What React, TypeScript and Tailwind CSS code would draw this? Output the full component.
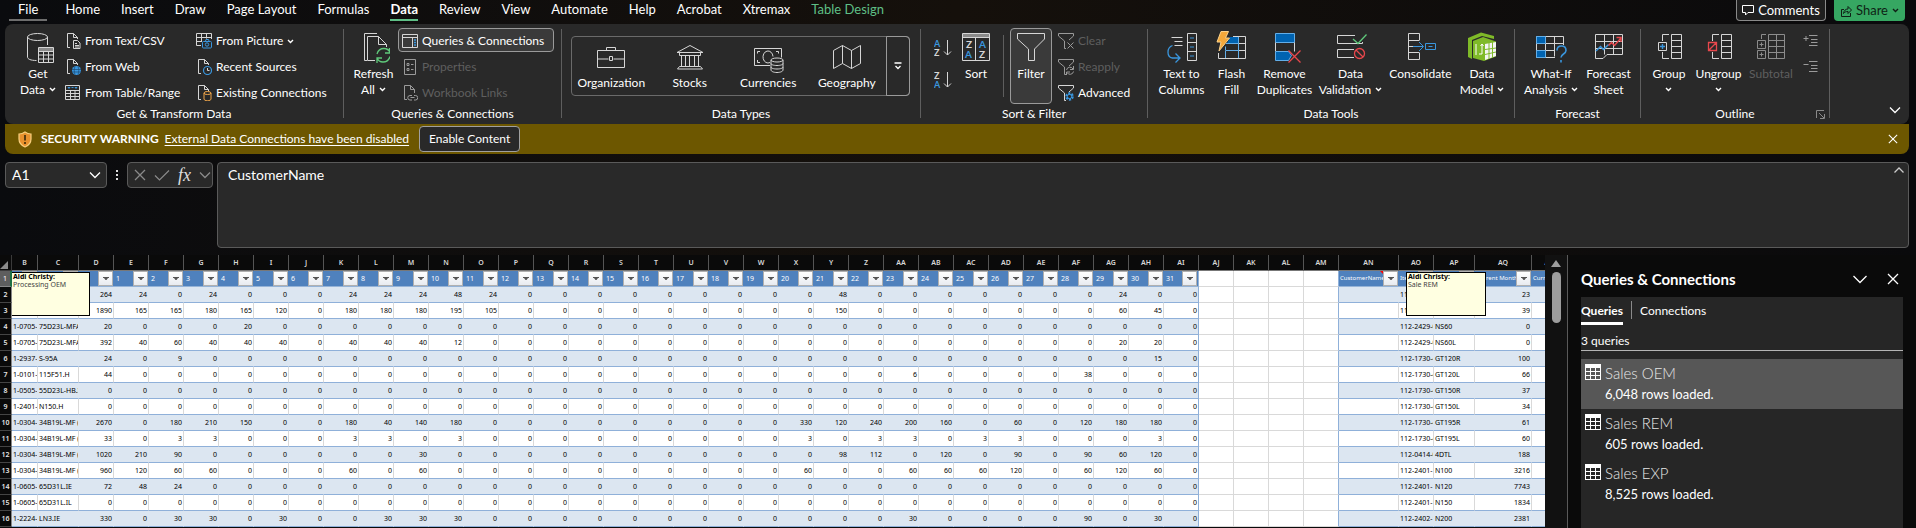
import React from 'react';

type Kids = { children?: React.ReactNode };

/* ---------- icon helpers ---------- */
function Svg({ w, h, children, className = '' }: { w: number; h: number; className?: string } & Kids) {
  return (
    <svg width={w} height={h} viewBox={`0 0 ${w} ${h}`} fill="none" stroke="#d6d6d6" className={`shrink-0 ${className}`} aria-hidden="true">
      {children}
    </svg>
  );
}
const Big = ({ children }: Kids) => <Svg w={32} h={32}>{children}</Svg>;
const Small = ({ children }: Kids) => <Svg w={16} h={16}>{children}</Svg>;

const Caret = ({ className = '' }: { className?: string }) => (
  <Svg w={7} h={5} className={`inline-block ${className}`}>
    <path d="M1 1l2.5 2.5L6 1" stroke="currentColor" strokeWidth="1.4" />
  </Svg>
);
const Chevron = ({ up = false }: { up?: boolean }) => (
  <Svg w={12} h={8}>
    <path d={up ? 'M1.5 6.5L6 2l4.5 4.5' : 'M1 1.5l5 5 5-5'} stroke="currentColor" strokeWidth="1.3" />
  </Svg>
);
const WideChevron = () => (
  <Svg w={14} h={9}>
    <path d="M.5 1L7 7.5 13.5 1" stroke="currentColor" strokeWidth="1.3" />
  </Svg>
);
const Cross = ({ size = 12 }: { size?: number }) => (
  <svg width={size} height={size} viewBox="0 0 12 12" fill="none" stroke="currentColor" strokeWidth="1.3" aria-hidden="true">
    <path d="M1 1l10 10M11 1L1 11" />
  </svg>
);

const BLUE = '#3a96dd';
const GREEN = '#5fc97b';
const RED = '#e8474c';
const SheetOutline = () => <path d="M5 14.5H2.5V.5h6l4 4V6M8.5.5v4h4" />;

const GetDataIcon = () => (
  <Big>
    <ellipse cx="15.5" cy="6" rx="10" ry="3.5" />
    <path d="M5.5 6v20c0 2 3 3.5 9 3.5M25.5 6v8" />
    <path d="M16.5 16.5h15v15h-15zM16.5 20.5h15M16.5 24h15M16.5 28h15M21.5 20v11M26.5 20v11" />
    <path d="M17 18.5h14" stroke="#8a8a8a" strokeWidth="3" />
  </Big>
);
const TextCsvIcon = () => (
  <Small>
    <SheetOutline />
    <path d="M8.5 7.5h4l2.5 2.5v5.5H8.5zM10 10.5h2M10 12.5h4M10 14h4" />
  </Small>
);
const WebIcon = () => (
  <Small>
    <SheetOutline />
    <circle cx="11.5" cy="11.5" r="4.5" fill={BLUE} stroke="none" />
    <path d="M7 10.5h9M7 13h9M10 7.5c-1 2.5-1 5.5 0 8M13 7.5c1 2.5 1 5.5 0 8" stroke="#1d4f7c" strokeWidth=".8" />
  </Small>
);
const TableRangeIcon = () => (
  <Small>
    <path d="M.5.5h14v14H.5zM.5 5.5h14M.5 8.5h14M.5 11.5h14M5.5 5v10M10 5v10" />
    <path d="M3 2.5h2l-1 1zM10 2.5h2l-1 1zM6.5 2.5h2" stroke={BLUE} />
  </Small>
);
const PictureIcon = () => (
  <Small>
    <path d="M5 12.5H.5V.5h15V6M.5 4.5h15M.5 8.5H6M5.5.5v8M10.5.5v5" />
    <rect x="6.5" y="8.5" width="9" height="6.5" rx="1" stroke={BLUE} />
    <path d="M9.5 8l.5-1.5h2.5L13 8" stroke={BLUE} />
    <circle cx="11" cy="11.5" r="1.7" stroke={BLUE} />
  </Small>
);
const RecentIcon = () => (
  <Small>
    <SheetOutline />
    <circle cx="11.5" cy="11.5" r="4" stroke={BLUE} strokeWidth="1.2" />
    <path d="M11.5 9v2.5h2" />
  </Small>
);
const ExistingIcon = () => (
  <Small>
    <SheetOutline />
    <ellipse cx="11.5" cy="8" rx="3.5" ry="1.5" stroke="#f0a64b" />
    <path d="M8 8v6c0 1 1.5 1.7 3.5 1.7S15 15 15 14V8" stroke="#f0a64b" />
  </Small>
);
const RefreshIcon = () => (
  <Big>
    <path d="M19 2.5H6.5v27H9" />
    <path d="M17 29.5H9.5v-24h11l8 8V16M20.5 5.5v8h8" />
    <path d="M19 23c1-3.5 4-5.5 7-5.5 3 0 5 1.5 6 4M32 25.5c-1 3.5-4 5.5-7 5.5-3 0-5-1.5-6-4M31.5 17v5H27M19 32v-5h5" stroke={GREEN} strokeWidth="1.3" />
  </Big>
);
const QueriesIcon = () => (
  <Small>
    <path d="M.5 1.5h15v13H.5zM.5 4.5h15M10.5 5v9" />
    <path d="M12 7h2M12 9.5h2M12 12h2" stroke={BLUE} strokeWidth="1.4" />
  </Small>
);
const PropertiesIcon = () => (
  <Small>
    <g stroke="#9a9a9a">
      <path d="M2.5.5h11v15h-11zM5 4.5h2v2H5zM5 9.5h2v2H5zM9 5.5h2.5M9 10.5h2.5" />
    </g>
  </Small>
);
const LinksIcon = () => (
  <Small>
    <g stroke="#9a9a9a">
      <path d="M5 14.5H2.5V.5h6l4 4V8M8.5.5v4h4" />
      <path d="M10 10.5H8a2 2 0 000 4.5h2M12 10.5h1.5a2 2 0 010 4.5H12M8.5 12.5h4" />
    </g>
  </Small>
);
const OrganizationIcon = () => (
  <Big>
    <path d="M2.5 7.5h27v17h-27zM2.5 16h11M18.5 16h11M14.5 13.5h3v4h-3zM11.5 7.5v-3h9v3" />
  </Big>
);
const StocksIcon = () => (
  <Big>
    <path d="M3 9.5L16 2.5l13 7zM5.5 9.5v3h21v-3M7.5 12.5v11M11.5 12.5v11M15.5 12.5v11M20.5 12.5v11M24.5 12.5v11M5.5 23.5h21l2 2.5h-25z" />
  </Big>
);
const CurrenciesIcon = () => (
  <Big>
    <path d="M18 22.5H2.5V5.5h27v9" />
    <path d="M8 8.5H5.5v2M5.5 17v2.5H8M24 8.5h2.5v2" />
    <path d="M18 19.5a5 6 0 113-6" />
    <ellipse cx="25" cy="17" rx="6" ry="2" />
    <path d="M19 17v10c0 1.3 2.5 2.5 6 2.5s6-1.2 6-2.5V17M19 20.5c0 1.2 2.5 2 6 2s6-.8 6-2M19 24c0 1.2 2.5 2 6 2s6-.8 6-2" />
  </Big>
);
const GeographyIcon = () => (
  <Big>
    <path d="M2.5 7.5l9-5 9 5 9-5v18l-9 5-9-5-9 5zM11.5 2.5v18M20.5 7.5v18" />
  </Big>
);
const SortPairIcon = ({ first, second, blueFirst }: { first: string; second: string; blueFirst: boolean }) => (
  <Svg w={18} h={18}>
    <g stroke="none" className="text-[9px] font-bold">
      <text x="0" y="8" fill={blueFirst ? BLUE : '#d6d6d6'}>{first}</text>
      <text x="0" y="17" fill={blueFirst ? '#d6d6d6' : BLUE}>{second}</text>
    </g>
    <path d="M13.5 1v15M10 12.5l3.5 3.5 3.5-3.5" />
  </Svg>
);
const SortIcon = () => (
  <Big>
    <path d="M2.5 2.5h27v27h-27zM2.5 6.5h27M15.5 6.5v23" />
    <path d="M3 4.5h26" stroke="#8a8a8a" strokeWidth="3" />
    <g stroke="none" className="text-[10px] font-bold">
      <text x="6" y="17" fill="#d6d6d6">Z</text>
      <text x="5" y="27" fill={BLUE}>A</text>
      <text x="19" y="17" fill={BLUE}>A</text>
      <text x="19" y="27" fill="#d6d6d6">Z</text>
    </g>
  </Big>
);
const FilterIcon = () => (
  <Big>
    <path d="M2.5 2.5h27V8l-10 10v11.5h-6V18l-11-10z" />
  </Big>
);
const SmallFunnel = ({ color }: { color: string }) => <path d="M8 15.5H6.5V8L.5 3V.5h15V3L11 7" stroke={color} />;
const ClearIcon = () => (
  <Small>
    <SmallFunnel color="#9a9a9a" />
    <path d="M9.5 9.5l6 6M15.5 9.5l-6 6" stroke="#9a9a9a" />
  </Small>
);
const ReapplyIcon = () => (
  <Small>
    <SmallFunnel color="#9a9a9a" />
    <path d="M8.5 11a3.5 3.5 0 016.5-1M15.5 12.5a3.5 3.5 0 01-6.5 1M15.5 7v3.5H12M8.5 16v-3H12" stroke="#9a9a9a" />
  </Small>
);
const AdvancedIcon = () => (
  <Small>
    <SmallFunnel color="#d6d6d6" />
    <circle cx="11.5" cy="11.5" r="3" stroke={BLUE} strokeWidth="2.5" strokeDasharray="2 1.14" />
    <circle cx="11.5" cy="11.5" r="2.2" stroke={BLUE} />
  </Small>
);
const TextColumnsIcon = () => (
  <Big>
    <path d="M5.5 6.5h11M8.5 10.5h8M8.5 14.5h8" />
    <path d="M21.5 2.5h9v27h-9zM21.5 11.5h9M21.5 20.5h9" />
    <path d="M24 7h4M24 16h4M24 25h4" stroke={BLUE} />
    <path d="M6.5 14.5c-6 2-6 11.5 0 12.5H14M9.5 22.5L14 27l-4.5 4.5" stroke={BLUE} strokeWidth="1.3" />
  </Big>
);
const FlashIcon = () => (
  <Big>
    <path d="M2.5 22v5.5h27v-22H17M29.5 12.5h-8M29.5 19.5h-8M22.5 5.5v22M9.5 20v7.5" />
    <path d="M14 6h8.5v6.5H11z" fill="#0063b1" stroke="none" />
    <path d="M10 12.5h12.5v7H9.5v-4M22.5 6v21M9.5 20v7" stroke="#63aee8" />
    <path d="M5 .5h7.5L9.5 7h4L3 20l2-9H1z" fill="#f4a83a" stroke="#fbd28a" />
  </Big>
);
const DuplicatesIcon = () => (
  <Big>
    <path d="M6.5 2.5h19v9h-19z" fill="#0063b1" stroke="#63aee8" />
    <path d="M6.5 11.5v9M25.5 11.5v9" />
    <path d="M6.5 20.5h13l3 4-3 5h-13z" fill="#0063b1" stroke="#63aee8" />
    <path d="M19.5 19.5l12 12M31.5 19.5l-12 12" stroke={RED} strokeWidth="1.3" />
  </Big>
);
const ValidationIcon = () => (
  <Big>
    <path d="M20 4.5H2.5v8h25V11M19 18.5H2.5v8H19" />
    <path d="M18 8l5 4.5 8.5-9" stroke={GREEN} strokeWidth="1.3" />
    <circle cx="24.5" cy="22.5" r="5" stroke={RED} strokeWidth="1.3" />
    <path d="M21 19l7 7" stroke={RED} strokeWidth="1.3" />
  </Big>
);
const ConsolidateIcon = () => (
  <Big>
    <path d="M14.5 9V2.5h-11v26h11V22M3.5 9.5h11M3.5 21.5h11M3.5 15.5H10" />
    <path d="M8 15.5h10M14 11l4.5 4.5L14 20M20.5 12.5h10v6h-10zM23.5 15.5h4" stroke={BLUE} />
  </Big>
);
const ModelIcon = () => (
  <Big>
    <path d="M2 7l13-5.5 13 3.5v3L16 5 6 9v19l-4-2z" fill="#7fba28" stroke="none" />
    <path d="M7 10l10-4 13 4.5v15L18 30 7 27z" fill="#7fba28" stroke="none" />
    <path d="M19 13l11-2v14l-11 4z" fill="#f4f4f4" stroke="none" />
    <path d="M19 18.5l11-1.5M19 23.5l11-2.5M23 12v16M26.5 11v16" stroke="#7fba28" />
    <path d="M10 13v11M13 23h3V13M14.5 15l1.5-2 1.5 2" stroke="#fff" />
  </Big>
);
const WhatIfIcon = () => (
  <Big>
    <path d="M1.5 5.5h27V14M20 26.5H1.5v-21M1.5 12.5h27M1.5 19.5h18M10.5 5.5v21M19.5 5.5v20" />
    <path d="M1.5 5.5h9v7h-9zM1.5 19.5h9v7h-9z" fill="#0063b1" stroke="#63aee8" />
    <path d="M22 19.5c0-3 2-4.5 4.5-4.5s4.5 1.5 4.5 4.5c0 3.5-5 3.5-5 7M26 29v2.5" stroke={BLUE} strokeWidth="1.6" />
  </Big>
);
const ForecastIcon = () => (
  <Big>
    <path d="M2.5 3.5h27v20H14l-4 4H2.5zM2.5 10.5h27M2.5 17.5h27M11.5 3.5v20M20.5 3.5v20" />
    <path d="M3 20l4.5-4.5 3 3 5-5" stroke={BLUE} strokeWidth="1.5" />
    <path d="M15.5 14.5l3-3 3 3L28 7M23.5 6.5H28V11" stroke={RED} strokeWidth="1.5" />
  </Big>
);
const BlockColumn = () => <path d="M18.5 3.5h10v24h-10zM18.5 9.5h10M18.5 15.5h10M18.5 21.5h10" />;
const GroupIcon = () => (
  <Big>
    <BlockColumn />
    <path d="M16 3.5H9.5V10M9.5 21v6.5H16M5.5 11.5h8v8h-8z" />
    <path d="M7 15.5h5M9.5 13v5" stroke={BLUE} strokeWidth="1.4" />
  </Big>
);
const UngroupIcon = () => (
  <Big>
    <BlockColumn />
    <path d="M16 3.5H9.5V10M9.5 21v6.5H16" />
    <path d="M5.5 11.5h8v8h-8zM5.5 19.5l8-8" stroke={RED} strokeWidth="1.3" />
  </Big>
);
const SubtotalIcon = () => (
  <Big>
    <g stroke="#8c8c8c">
      <path d="M13.5 3.5h16v24h-16zM13.5 9.5h16M13.5 15.5h16M13.5 21.5h16M21.5 3.5v24" />
      <path d="M11 3.5H6.5V8M2.5 9.5h8v8h-8zM2.5 19.5h8v8h-8zM4.5 13.5h4M6.5 11.5v4M4.5 23.5h4M6.5 21.5v4" />
    </g>
  </Big>
);
const DetailIcon = ({ plus }: { plus: boolean }) => (
  <Svg w={15} h={12}>
    <g stroke="#9a9a9a">
      <path d="M6 1.5h8.5M8 5.5h6.5M8 8.5h6.5M6 11.5h8.5M.5 4.5h5" />
      {plus && <path d="M3 2v5" />}
    </g>
  </Svg>
);
const TableGlyph = () => (
  <Svg w={16} h={16}>
    <rect width="16" height="16" fill="#fff" stroke="none" />
    <g fill="currentColor" stroke="none">
      {[4, 8, 12].map((y) => [1, 6, 11].map((x) => <rect key={`${x}-${y}`} x={x} y={y} width="4" height="3" />))}
    </g>
  </Svg>
);
const Shield = () => (
  <Svg w={14} h={17}>
    <path d="M7 1c2 1.5 4 2 6 2v5c0 4-2.500 6.500-6 8-3.500-1.500-6-4-6-8V3c2 0 4-.5 6-2z" fill="#e8912d" stroke="#f9cf7d" strokeWidth="1.2" />
    <path d="M7 4v5.5M7 11v2" stroke="#5b3d10" strokeWidth="2" />
  </Svg>
);

/* ---------- ribbon parts ---------- */
const TABS = ['File', 'Home', 'Insert', 'Draw', 'Page Layout', 'Formulas', 'Data', 'Review', 'View', 'Automate', 'Help', 'Acrobat', 'Xtremax', 'Table Design'];

function TabBar() {
  return (
    <header className="flex h-6 items-start justify-between pr-[11px] pl-[9px]">
      <nav className="flex items-start gap-[21px] whitespace-nowrap text-[13px] leading-[19px]">
        {TABS.map((t) => (
          <button
            key={t}
            className={
              t === 'File'
                ? '-mr-[3px] border-b-2 border-[#6e6e6e] px-[9px]'
                : t === 'Data'
                  ? 'border-b-2 border-[#5fbf86] font-bold'
                  : t === 'Table Design'
                    ? 'text-[#5fbf86]'
                    : ''
            }
          >
            {t}
          </button>
        ))}
      </nav>
      <div className="flex gap-2 text-[13px] leading-[19px]">
        <button className="flex h-[21px] w-[90px] items-center justify-center gap-1 rounded-b border border-t-0 border-[#8a8a8a] bg-[#1f1f1f]">
          <Svg w={12} h={12}><path d="M.5 1.5h11v7H6L3.5 11V8.5h-3z" stroke="#fff" /></Svg>
          Comments
        </button>
        <button className="flex h-[21px] w-[71px] items-center justify-center gap-1 rounded-b bg-[#36a762] text-[#0f1f15]">
          <Svg w={12} h={12}><path d="M4 4.5H1.5v7h9V8M3.5 8.5C4 5.500 5.500 4 8 4V1.500L11.500 5 8 8.500V6.500c-2 0-3.500.5-4.500 2z" stroke="#0f1f15" /></Svg>
          Share
          <Caret />
        </button>
      </div>
    </header>
  );
}

function LargeButton({ icon, lines, caret = false, width, active = false, disabled = false }: {
  icon: React.ReactNode; lines: string[]; caret?: boolean; width: string; active?: boolean; disabled?: boolean;
}) {
  return (
    <button
      disabled={disabled}
      className={`flex h-[76px] shrink-0 flex-col items-center rounded ${width} ${active ? 'border border-[#9a9a9a] bg-[#3a3a3a] pt-[2px]' : 'pt-[3px]'} ${disabled ? 'text-[#5f5f5f]' : ''}`}
    >
      {icon}
      <span className="mt-[3px] flex flex-col items-center whitespace-nowrap leading-4">
        {lines.map((l, i) => (
          <span key={i}>
            {l}
            {caret && i === lines.length - 1 && <Caret className={l ? 'mb-0.5 ml-1' : 'mb-0.5'} />}
          </span>
        ))}
      </span>
    </button>
  );
}

function SmallButton({ icon, label, caret = false, active = false, disabled = false }: {
  icon: React.ReactNode; label: string; caret?: boolean; active?: boolean; disabled?: boolean;
}) {
  return (
    <button
      disabled={disabled}
      className={`flex h-6 items-center gap-1 rounded border px-[3px] pt-0.5 whitespace-nowrap ${active ? 'border-[#9a9a9a] bg-[#3a3a3a]' : 'border-transparent'} ${disabled ? 'text-[#5f5f5f]' : ''}`}
    >
      {icon}
      {label}
      {caret && <Caret />}
    </button>
  );
}

const Stack = ({ children, width = '' }: { width?: string } & Kids) => (
  <div className={`flex flex-col items-stretch gap-0.5 ${width}`}>{children}</div>
);

function Group({ label, width, children, launcher = false }: { label: string; width: string; launcher?: boolean } & Kids) {
  return (
    <section className={`flex shrink-0 items-stretch ${width}`}>
      <div className="flex min-w-0 flex-1 flex-col pt-1">
        <div className="flex h-[78px] items-start pl-[5px]">{children}</div>
        <div className="relative text-center leading-4">
          {label}
          {launcher && (
            <button aria-label="Outline settings" className="absolute top-1 right-1">
              <Svg w={9} h={9}><path d="M.5 8V.5H8M3 3l5 5M8.5 4v4.5H4" stroke="#8a8a8a" /></Svg>
            </button>
          )}
        </div>
      </div>
      <div className="mt-[5px] mb-1.5 w-px bg-[#5e5e5e]" />
    </section>
  );
}

function Ribbon() {
  return (
    <div className="flex h-[100px] rounded-lg bg-[#292929]">
      <Group label="Get & Transform Data" width="w-[339px]">
        <LargeButton icon={<GetDataIcon />} lines={['Get', 'Data']} caret width="w-[56px]" />
        <Stack width="-ml-[5px] w-[131px]">
          <SmallButton icon={<TextCsvIcon />} label="From Text/CSV" />
          <SmallButton icon={<WebIcon />} label="From Web" />
          <SmallButton icon={<TableRangeIcon />} label="From Table/Range" />
        </Stack>
        <Stack>
          <SmallButton icon={<PictureIcon />} label="From Picture" caret />
          <SmallButton icon={<RecentIcon />} label="Recent Sources" />
          <SmallButton icon={<ExistingIcon />} label="Existing Connections" />
        </Stack>
      </Group>
      <Group label="Queries & Connections" width="w-[218px]">
        <LargeButton icon={<RefreshIcon />} lines={['Refresh', 'All']} caret width="w-[49px]" />
        <Stack width="w-[156px]">
          <SmallButton icon={<QueriesIcon />} label="Queries & Connections" active />
          <SmallButton icon={<PropertiesIcon />} label="Properties" disabled />
          <SmallButton icon={<LinksIcon />} label="Workbook Links" disabled />
        </Stack>
      </Group>
      <Group label="Data Types" width="w-[359px]">
        <div className="mt-2 ml-1 flex h-[60px] w-[339px] rounded border border-[#6a6a6a]">
          {[
            ['Organization', <OrganizationIcon key="o" />],
            ['Stocks', <StocksIcon key="s" />],
            ['Currencies', <CurrenciesIcon key="c" />],
            ['Geography', <GeographyIcon key="g" />],
          ].map(([label, icon]) => (
            <button key={label as string} className="flex flex-1 flex-col items-center pt-[6px] leading-4">
              {icon}
              {label}
            </button>
          ))}
          <button aria-label="More data types" className="-my-px -mr-px flex w-6 items-center justify-center rounded-r border border-[#9a9a9a]">
            <Svg w={8} h={8}><path d="M.5 1h7M1.5 4L4 6.5 6.5 4" stroke="#fff" strokeWidth="1.3" /></Svg>
          </button>
        </div>
      </Group>
      <Group label="Sort & Filter" width="w-[227px]">
        <div className="flex w-[33px] flex-col items-center gap-[14px] pt-[11px]">
          <button aria-label="Sort A to Z"><SortPairIcon first="A" second="Z" blueFirst /></button>
          <button aria-label="Sort Z to A"><SortPairIcon first="Z" second="A" blueFirst={false} /></button>
        </div>
        <LargeButton icon={<SortIcon />} lines={['Sort']} width="w-[34px]" />
        <div className="mt-[7px] mr-1.5 ml-2.5 h-[62px] w-px shrink-0 bg-[#5e5e5e]" />
        <LargeButton icon={<FilterIcon />} lines={['Filter']} width="w-[42px]" active />
        <Stack width="ml-0.5">
          <SmallButton icon={<ClearIcon />} label="Clear" disabled />
          <SmallButton icon={<ReapplyIcon />} label="Reapply" disabled />
          <SmallButton icon={<AdvancedIcon />} label="Advanced" />
        </Stack>
      </Group>
      <Group label="Data Tools" width="w-[367px]">
        <LargeButton icon={<TextColumnsIcon />} lines={['Text to', 'Columns']} width="w-[57px]" />
        <LargeButton icon={<FlashIcon />} lines={['Flash', 'Fill']} width="w-[43px]" />
        <LargeButton icon={<DuplicatesIcon />} lines={['Remove', 'Duplicates']} width="w-[63px]" />
        <LargeButton icon={<ValidationIcon />} lines={['Data', 'Validation']} caret width="w-[69px]" />
        <LargeButton icon={<ConsolidateIcon />} lines={['Consolidate']} width="w-[71px]" />
        <LargeButton icon={<ModelIcon />} lines={['Data', 'Model']} caret width="w-[52px]" />
      </Group>
      <Group label="Forecast" width="w-[126px]">
        <LargeButton icon={<WhatIfIcon />} lines={['What-If', 'Analysis']} caret width="w-[62px]" />
        <LargeButton icon={<ForecastIcon />} lines={['Forecast', 'Sheet']} width="w-[53px]" />
      </Group>
      <Group label="Outline" width="w-[189px]" launcher>
        <LargeButton icon={<GroupIcon />} lines={['Group', '']} caret width="w-[46px]" />
        <LargeButton icon={<UngroupIcon />} lines={['Ungroup', '']} caret width="w-[53px]" />
        <LargeButton icon={<SubtotalIcon />} lines={['Subtotal']} width="w-[52px]" disabled />
        <div className="flex flex-col gap-[14px] pt-[6px] pl-[6px]">
          <button aria-label="Show detail"><DetailIcon plus /></button>
          <button aria-label="Hide detail"><DetailIcon plus={false} /></button>
        </div>
      </Group>
      <div className="flex flex-1 items-end justify-end pr-2 pb-2.5">
        <button aria-label="Collapse ribbon"><Chevron /></button>
      </div>
    </div>
  );
}

function WarningBar() {
  return (
    <div className="flex h-[30px] items-center rounded-b-lg bg-[#6d5700] pr-[11px] pl-[13px]">
      <Shield />
      <strong className="ml-[9px] font-bold">SECURITY WARNING</strong>
      <a href="#connections" className="ml-1.5 underline underline-offset-2">External Data Connections have been disabled</a>
      <button className="ml-2.5 h-[26px] w-[101px] rounded border border-[#a0a0a0] bg-[#292929] whitespace-nowrap">Enable Content</button>
      <button aria-label="Dismiss warning" className="ml-auto"><Cross size={10} /></button>
    </div>
  );
}

function FormulaBar() {
  return (
    <div className="flex items-start gap-1 text-[14px] leading-[18px]">
      <label className="flex h-[26px] w-[102px] items-center rounded border border-[#5a5a5a] bg-[#292929] pr-[5px] pl-1.5">
        <input aria-label="Name box" defaultValue="A1" className="w-full min-w-0 bg-transparent outline-none" />
        <Chevron />
      </label>
      <div className="flex h-[26px] w-3 flex-col items-center justify-center gap-[2px]">
        <i className="size-[2px] bg-[#ddd]" />
        <i className="size-[2px] bg-[#ddd]" />
        <i className="size-[2px] bg-[#ddd]" />
      </div>
      <div className="flex h-[26px] w-[86px] items-center justify-between rounded border border-[#5a5a5a] bg-[#292929] pr-px pl-1.5 text-[#8a8a8a]">
        <button aria-label="Cancel"><Cross /></button>
        <button aria-label="Enter"><Svg w={16} h={12}><path d="M1 6.5L5.5 11 15 1.5" stroke="currentColor" strokeWidth="1.2" /></Svg></button>
        <button className="font-['Liberation_Serif',serif] text-[18px] text-[#ddd] italic">fx</button>
        <button aria-label="Function list"><Chevron /></button>
      </div>
      <div className="flex h-[86px] flex-1 items-start rounded border border-[#5a5a5a] bg-[#292929] pt-[3px] pr-[3px] pl-2.5">
        <textarea aria-label="Formula bar" defaultValue="CustomerName" className="h-[78px] flex-1 resize-none bg-transparent outline-none" />
        <button aria-label="Collapse formula bar" className="text-[#ccc]"><Chevron up /></button>
      </div>
    </div>
  );
}

/* ---------- worksheet ---------- */
const letters = (n: number): string => (n < 26 ? String.fromCharCode(65 + n) : 'A' + String.fromCharCode(65 + n - 26));

type Row = { b: string; c: string; total: number; days: Record<number, number>; item: string; model: string; stock: number };
const ROWS: Row[] = [
  { b: '', c: '', total: 264, days: { 1: 24, 3: 24, 7: 24, 8: 24, 9: 24, 10: 48, 11: 24, 21: 48, 29: 24 }, item: '112-2429-0', model: '', stock: 23 },
  { b: '', c: '', total: 1890, days: { 1: 165, 2: 165, 3: 180, 4: 165, 5: 120, 7: 180, 8: 180, 9: 180, 10: 195, 11: 105, 21: 150, 29: 60, 30: 45 }, item: '112-2429-0', model: '', stock: 39 },
  { b: '1-0705-1', c: '75D23L-MFA', total: 20, days: { 4: 20 }, item: '112-2429-0', model: 'NS60', stock: 0 },
  { b: '1-0705-1', c: '75D23L-MFA', total: 392, days: { 1: 40, 2: 60, 3: 40, 4: 40, 5: 40, 7: 40, 8: 40, 9: 40, 10: 12, 29: 20, 30: 20 }, item: '112-2429-0', model: 'NS60L', stock: 0 },
  { b: '1-2937-0', c: 'S-95A', total: 24, days: { 2: 9, 30: 15 }, item: '112-1730-4', model: 'GT120R', stock: 100 },
  { b: '1-0101-0', c: '115F51.H', total: 44, days: { 23: 6, 28: 38 }, item: '112-1730-4', model: 'GT120L', stock: 66 },
  { b: '1-0505-0', c: '55D23L-HB.I', total: 0, days: {}, item: '112-1730-4', model: 'GT150R', stock: 37 },
  { b: '1-2401-0', c: 'N150.H', total: 0, days: {}, item: '112-1730-4', model: 'GT150L', stock: 34 },
  { b: '1-0304-1', c: '34B19L-MF (', total: 2670, days: { 2: 180, 3: 210, 4: 150, 7: 180, 8: 40, 9: 140, 10: 180, 20: 330, 21: 120, 22: 240, 23: 200, 24: 160, 26: 60, 28: 120, 29: 180, 30: 180 }, item: '112-1730-4', model: 'GT195R', stock: 61 },
  { b: '1-0304-1', c: '34B19L-MF (', total: 33, days: { 2: 3, 3: 3, 7: 3, 8: 3, 10: 3, 20: 3, 22: 3, 23: 3, 25: 3, 26: 3, 30: 3 }, item: '112-1730-4', model: 'GT195L', stock: 60 },
  { b: '1-0304-1', c: '34B19L-MF (', total: 1020, days: { 1: 210, 2: 90, 9: 30, 21: 98, 22: 112, 24: 120, 26: 90, 28: 90, 29: 60, 30: 120 }, item: '112-0414-0', model: '4DTL', stock: 188 },
  { b: '1-0304-1', c: '34B19L-MF (', total: 960, days: { 1: 120, 2: 60, 3: 60, 7: 60, 9: 60, 20: 60, 23: 60, 24: 60, 25: 60, 26: 120, 28: 60, 29: 120, 30: 60 }, item: '112-2401-1', model: 'N100', stock: 3216 },
  { b: '1-0605-0', c: '65D31L.IE', total: 72, days: { 1: 48, 2: 24 }, item: '112-2401-1', model: 'N120', stock: 7743 },
  { b: '1-0605-0', c: '65D31L.IL', total: 0, days: {}, item: '112-2401-1', model: 'N150', stock: 1834 },
  { b: '1-2224-1', c: 'LN3.IE', total: 330, days: { 2: 30, 3: 30, 5: 30, 8: 30, 9: 30, 10: 30, 23: 30, 28: 90, 30: 30 }, item: '112-2402-1', model: 'N200', stock: 2381 },
];
const DAYS = Array.from({ length: 31 }, (_, i) => i + 1);

function HeaderCell({ label, edge = false, flag = false }: { label: string; edge?: boolean; flag?: boolean }) {
  return (
    <th className={`h-4 border-b border-[#95b3d7] bg-[#4f81bd] p-0 font-normal ${edge ? 'border-r' : ''}`}>
      <div className="relative flex h-[15px] items-center justify-between">
        <span className={`min-w-0 flex-1 overflow-hidden text-left text-white ${label.length > 2 ? 'pl-px text-[6px]' : 'pl-0.5'}`}>{label}</span>
        {flag && <svg width="3" height="3" viewBox="0 0 3 3" className="absolute top-0 right-4" aria-hidden="true"><path d="M0 0h3v3z" fill="#f00" /></svg>}
        <button aria-label={`Filter ${label}`} className="mr-px flex h-[15px] w-[15px] shrink-0 items-center justify-center border border-[#b0b0b0] bg-linear-to-b from-white to-[#e8ebf0]">
          <svg width="6" height="3" viewBox="0 0 6 3" aria-hidden="true"><path d="M0 0h6v1H5L3.500 3h-1L1 1H0z" fill="#555" /></svg>
        </button>
      </div>
    </th>
  );
}

function Cell({ children, band, right = false, edge = false, plain = false }: { band: boolean; right?: boolean; edge?: boolean; plain?: boolean } & Kids) {
  const bottom = plain ? 'border-b-[#d9d9d9]' : 'border-b-[#8fb0d9]';
  const side = edge ? 'border-r-[#8fb0d9]' : band && !plain ? 'border-r-[#dce6f1]' : 'border-r-[#d9d9d9]';
  const fill = band && !plain ? 'bg-[#dce6f1]' : 'bg-white';
  return (
    <td className={`h-4 overflow-hidden border-r border-b p-0 leading-[15px] ${bottom} ${side} ${fill} ${right ? 'pr-px text-right' : 'pl-px'}`}>{children}</td>
  );
}

function Note({ author, text, place }: { author: string; text: string; place: string }) {
  return (
    <div className={`absolute top-[17px] h-[44px] border border-black bg-[#ffffe1] pl-px text-[7px] leading-2 text-black ${place}`}>
      <b>{author}</b>
      <br />
      <span className="text-[#444]">{text}</span>
    </div>
  );
}

function Sheet() {
  return (
    <div className="relative min-w-0 flex-1 overflow-hidden bg-[#0a0a0a] [font-family:'Noto_Sans',sans-serif]">
      <table className="w-[1567px] table-fixed border-separate border-spacing-0 whitespace-nowrap text-[7px] leading-[15px] text-black">
        <colgroup>
          <col className="w-3" />
          <col className="w-[26px]" />
          <col className="w-[41px]" />
          {Array.from({ length: 36 }, (_, i) => <col key={i} className="w-[35px]" />)}
          <col className="w-[60px]" />
          <col className="w-[35px]" />
          <col className="w-[41px]" />
          <col className="w-[57px]" />
          <col className="w-[35px]" />
        </colgroup>
        <thead>
          <tr className="text-[#d8d8d8]">
            <td className="h-4 border-r border-b border-[#3a3a3a] bg-[#0a0a0a] p-0">
              <svg width="8" height="8" viewBox="0 0 8 8" className="mt-1 block" aria-hidden="true"><path d="M8 0v8H0z" fill="#8a8a8a" /></svg>
            </td>
            {Array.from({ length: 43 }, (_, i) => (
              <th key={i} className="h-4 overflow-hidden border-r border-b border-r-[#555] border-b-[#777] bg-[#0a0a0a] p-0 font-semibold">{letters(i + 1)}</th>
            ))}
          </tr>
          <tr>
            <th className="h-4 border-r-2 border-b border-r-[#1e7145] border-b-[#888] bg-[#5e5e5e] p-0 font-normal text-white">1</th>
            <HeaderCell label="" />
            <HeaderCell label="" />
            <HeaderCell label="" />
            {DAYS.map((d) => <HeaderCell key={d} label={String(d)} edge={d === 31} />)}
            <Cell band={false} plain />
            <Cell band={false} plain />
            <Cell band={false} plain />
            <Cell band={false} plain edge />
            <HeaderCell label="CustomerName" flag />
            <HeaderCell label="Item" />
            <HeaderCell label="" />
            <HeaderCell label="Current Month" />
            <HeaderCell label="Curr" />
          </tr>
        </thead>
        <tbody>
          {ROWS.map((r, i) => {
            const band = i % 2 === 0;
            return (
              <tr key={i}>
                <th className="h-4 overflow-hidden border-r border-b border-r-[#888] border-b-[#444] bg-[#0a0a0a] p-0 font-semibold text-[#e4e4e4]">{i + 2}</th>
                <Cell band={band}>{r.b}</Cell>
                <Cell band={band}>{r.c}</Cell>
                <Cell band={band} right>{r.total}</Cell>
                {DAYS.map((d) => <Cell key={d} band={band} right edge={d === 31}>{r.days[d] ?? 0}</Cell>)}
                <Cell band={band} plain />
                <Cell band={band} plain />
                <Cell band={band} plain />
                <Cell band={band} plain edge />
                <Cell band={band} />
                <Cell band={band}>{r.item}</Cell>
                <Cell band={band}>{r.model}</Cell>
                <Cell band={band} right>{r.stock}</Cell>
                <Cell band={band} />
              </tr>
            );
          })}
        </tbody>
      </table>
      <Note author="Aldi Christy:" text="Processing OEM" place="left-3 w-[78px] border-l-0" />
      <Note author="Aldi Christy:" text="Sale REM" place="left-[1406px] w-20" />
    </div>
  );
}

/* ---------- side panel ---------- */
const QUERIES = [
  { name: 'Sales OEM', rows: '6,048 rows loaded.' },
  { name: 'Sales REM', rows: '605 rows loaded.' },
  { name: 'Sales EXP', rows: '8,525 rows loaded.' },
];

function SidePanel() {
  return (
    <aside className="flex w-[349px] shrink-0 flex-col border-l border-[#5a5a5a] pr-[13px] pl-[13px]">
      <div className="flex h-[42px] items-center pt-1.5 pr-1">
        <h2 className="flex-1 text-[15px] font-bold whitespace-nowrap">Queries &amp; Connections</h2>
        <button aria-label="Panel options" className="mr-5"><WideChevron /></button>
        <button aria-label="Close panel"><Cross /></button>
      </div>
      <div className="flex-1 bg-[#262626]">
        <div className="flex h-[28px] items-stretch">
          <button className="border-b-[3px] border-white pt-0.5 font-bold">Queries</button>
          <div className="mx-2 mt-1 mb-1.5 w-px bg-[#8a8a8a]" />
          <button className="pt-0.5 pb-[3px]">Connections</button>
        </div>
        <p className="flex h-[26px] items-end border-b border-[#b4b4b4]">3 queries</p>
        <ul className="mt-2">
          {QUERIES.map((q, i) => (
            <li key={q.name} className={`flex h-[50px] gap-1 pt-[5px] pl-1 ${i === 0 ? 'bg-[#575757]' : ''}`}>
              <span className={i === 0 ? 'text-[#575757]' : 'text-[#262626]'}><TableGlyph /></span>
              <div>
                <div className="text-[15px] leading-[18px] font-light text-[#e6e6e6]">{q.name}</div>
                <div className="mt-[3px] text-[13px] leading-[18px]">{q.rows}</div>
              </div>
            </li>
          ))}
        </ul>
      </div>
    </aside>
  );
}

export default function App() {
  return (
    <div className="flex h-screen flex-col overflow-hidden bg-[#0a0a0a] bg-linear-to-r from-[#0a0b0e] via-[#15100b] to-[#0a0a0c] text-[12px] text-white [font-family:Lato,'Open_Sans',sans-serif]">
      <TabBar />
      <div className="flex flex-col pr-[7px] pl-[5px]">
        <Ribbon />
        <WarningBar />
        <div className="h-2" />
        <FormulaBar />
      </div>
      <div className="mt-[7px] flex min-h-0 flex-1 bg-[#0a0a0a]">
        <Sheet />
        <div className="flex w-[22px] shrink-0 flex-col items-center bg-[#111] pt-[5px]">
          <svg width="10" height="7" viewBox="0 0 10 7" aria-hidden="true"><path d="M5 0l5 7H0z" fill="#9d9d9d" /></svg>
          <div className="mt-[5px] h-[51px] w-[9px] rounded-full bg-[#9d9d9d]" />
        </div>
        <SidePanel />
      </div>
    </div>
  );
}
